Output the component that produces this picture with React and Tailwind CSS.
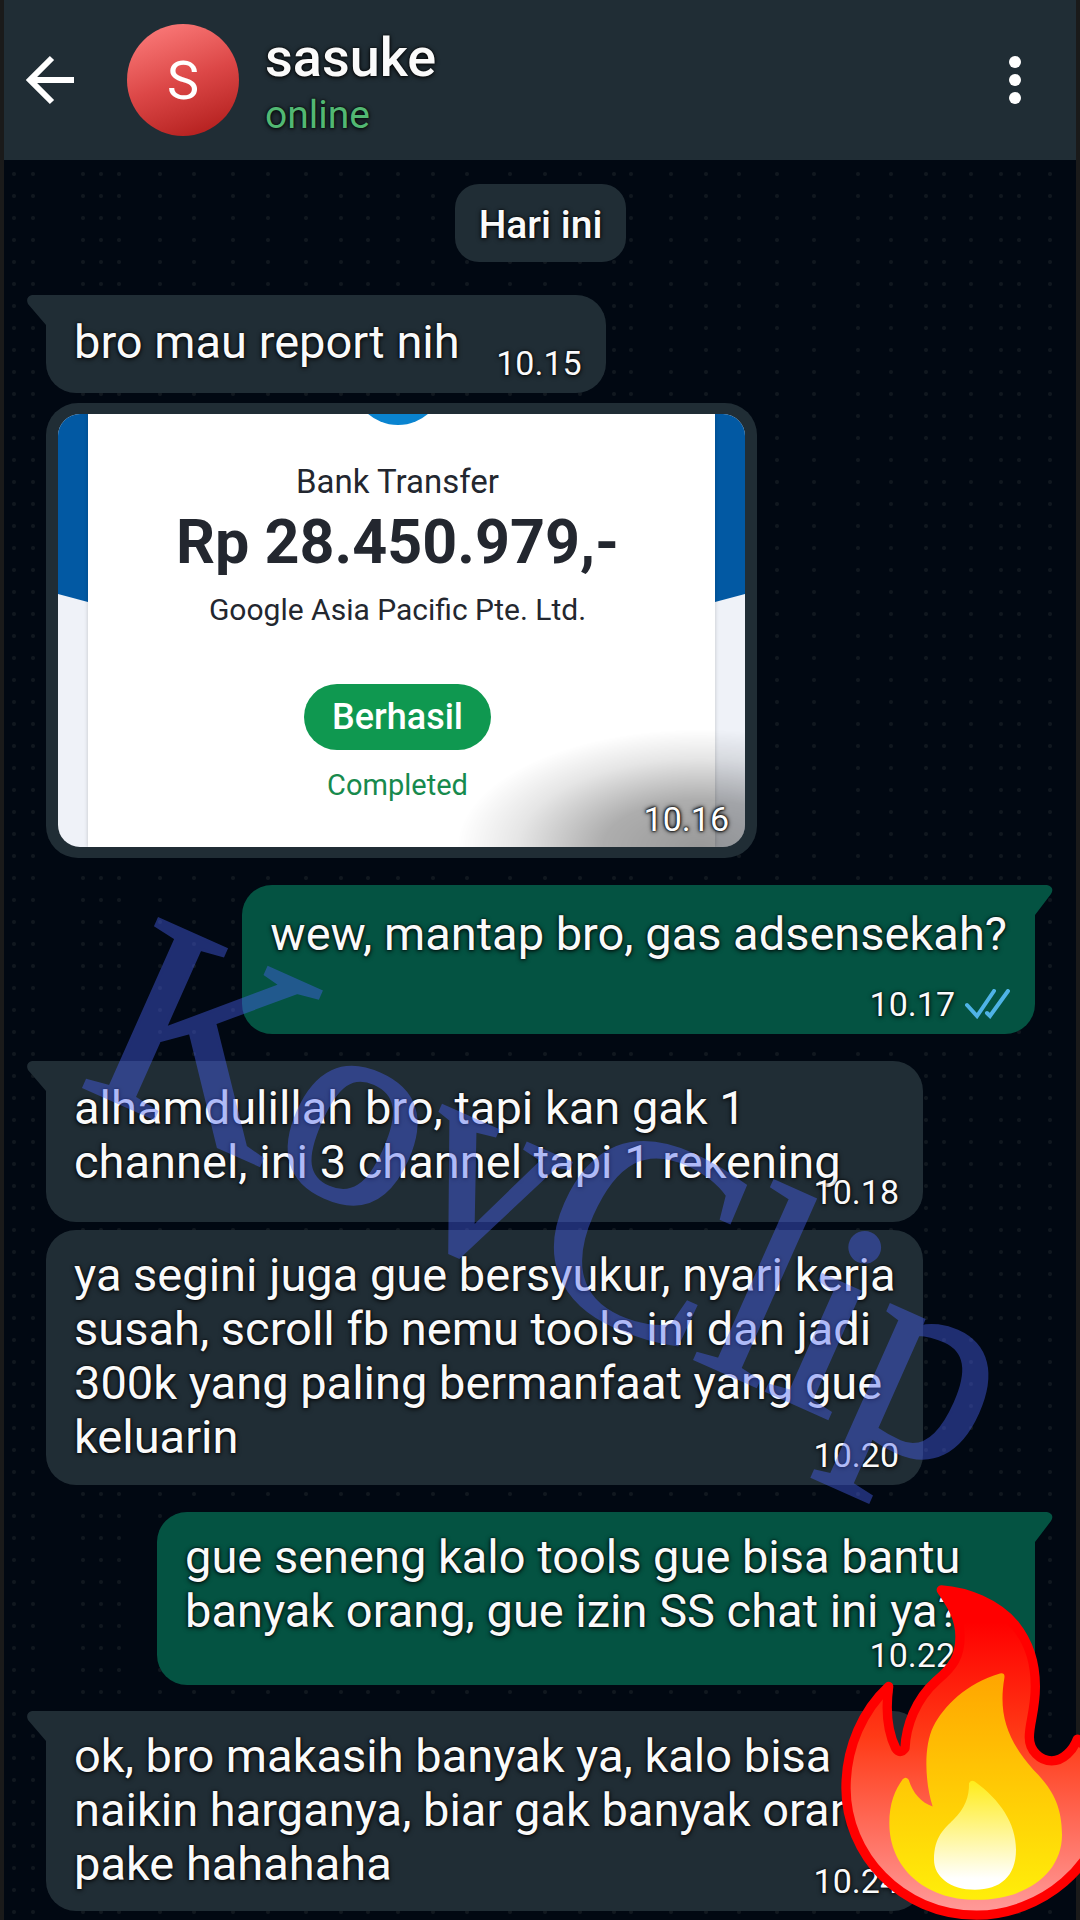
import React from "react";

const dotColumns = [
  10, 29, 79, 97, 115, 156, 190, 229, 264, 302, 337, 364, 394, 429, 463, 506,
  541, 576, 610, 627, 667, 702, 735, 773, 810, 854, 887, 922, 940, 967, 997,
  1015, 1046,
];

function Dots() {
  return (
    <svg className="absolute inset-0 h-full w-full" aria-hidden="true">
      <defs>
        <pattern id="dots" width="1072" height="22" patternUnits="userSpaceOnUse">
          {dotColumns.map((x) => (
            <circle key={x} cx={x} cy="14" r="2" fill="#11181f" />
          ))}
        </pattern>
      </defs>
      <rect width="100%" height="100%" fill="url(#dots)" />
    </svg>
  );
}

function Tail({ mine }) {
  return mine ? (
    <svg viewBox="0 0 20 34" className="absolute top-0 -right-[18px] h-[34px] w-5 text-[#045342]" aria-hidden="true">
      <path d="M0 0H14Q22 2 18 9L2 30V34H0Z" fill="currentColor" />
    </svg>
  ) : (
    <svg viewBox="0 0 20 34" className="absolute top-0 -left-[19px] h-[34px] w-5 text-[#202d35]" aria-hidden="true">
      <path d="M20 0H5Q-2 2 1 9L19 30V34H20Z" fill="currentColor" />
    </svg>
  );
}

function Ticks() {
  return (
    <svg viewBox="0 0 46 30" className="h-[30px] w-[46px]" fill="none" stroke="#4fb3e6" strokeWidth="4" strokeLinecap="round" aria-label="dibaca">
      <path d="M2 16L12 27L29 2M22 24L25 27L43 2" />
    </svg>
  );
}

function Time({ children, read }) {
  return (
    <span className="absolute right-6 bottom-2.5 flex items-center gap-2.5 text-[34px] leading-10">
      <time>{children}</time>
      {read && <Ticks />}
    </span>
  );
}

function Bubble({ mine, tail, time, className, children }) {
  return (
    <li className={mine ? "flex justify-end" : "flex justify-start"}>
      <div
        className={
          "relative rounded-[30px] pl-7 text-[47px] leading-[54px] " +
          (mine ? "bg-[#045342] " : "bg-[#202d35] ") +
          (tail ? (mine ? "rounded-tr-none " : "rounded-tl-none ") : "") +
          className
        }
      >
        {tail && <Tail mine={mine} />}
        <p>{children}</p>
        <Time read={mine}>{time}</Time>
      </div>
    </li>
  );
}

function Receipt() {
  return (
    <li className="mt-2.5 flex">
      <div className="w-full max-w-[711px] rounded-[32px] bg-[#202d35] px-3 py-[11px]">
        <div className="relative overflow-hidden rounded-[22px] bg-[#eff2f8] px-[30px] text-[#23272f] [text-shadow:none]">
          <svg viewBox="0 0 688 188" preserveAspectRatio="none" className="absolute inset-x-0 top-0 h-[188px] w-full" aria-hidden="true">
            <path d="M0 0H688V180L658 188H30L0 180Z" fill="#0259a3" />
          </svg>
          <div className="relative flex flex-col items-center overflow-hidden bg-white pt-[46px] pr-2 pb-10 shadow-[0_0_4px_rgba(0,0,0,0.2)]">
            <span className="absolute -top-[81px] h-[92px] w-[92px] rounded-full bg-[#0a84d0]" />
            <p className="text-[33px] leading-[44px]">Bank Transfer</p>
            <p className="text-[61px] leading-[76px] font-bold">Rp 28.450.979,-</p>
            <p className="mt-2 text-[30px] leading-[44px]">Google Asia Pacific Pte. Ltd.</p>
            <p className="mt-[52px] rounded-full bg-[#0f9850] px-7 text-4xl leading-[66px] font-medium text-white">Berhasil</p>
            <p className="mt-[13px] text-[29px] leading-[44px] text-[#178a4d]">Completed</p>
          </div>
          <div className="absolute right-0 bottom-0 h-32 w-80 bg-black/40 [mask-image:radial-gradient(ellipse_76%_92%_at_86%_100%,black_0%,rgba(0,0,0,0.8)_40%,rgba(0,0,0,0.25)_75%,transparent_100%)]" />
          <time className="absolute right-4 bottom-2 text-[34px] leading-10 text-white [text-shadow:0_0_2px_#000,0_0_3px_#000,0_0_5px_#000]">10.16</time>
        </div>
      </div>
    </li>
  );
}

function Fire() {
  return (
    <svg viewBox="180 250 720 1010" className="absolute right-0 bottom-0 h-[337px] w-60" aria-hidden="true">
      <defs>
        <linearGradient id="flame" x1="0" y1="0" x2="0" y2="1">
          <stop offset="0.1" stopColor="#ff0000" />
          <stop offset="0.45" stopColor="#ff3a16" />
          <stop offset="1" stopColor="#ff9c9c" />
        </linearGradient>
        <linearGradient id="middle" x1="0" y1="0" x2="0" y2="1">
          <stop offset="0" stopColor="#ffa500" />
          <stop offset="1" stopColor="#ffee0a" />
        </linearGradient>
        <linearGradient id="core" x1="0" y1="0" x2="0" y2="1">
          <stop offset="0" stopColor="#ffec1a" />
          <stop offset="0.9" stopColor="#ffffff" />
        </linearGradient>
      </defs>
      <path
        d="M484 270C560 275 650 310 705 375C755 438 766 500 766 560C766 630 748 670 748 712C748 752 780 783 815 783C850 783 880 750 892 718C940 760 981 810 981 890C970 1100 780 1246 590 1246C360 1246 198 1060 198 865C198 740 250 630 326 560C318 620 320 690 347 745Q360 765 375 745C378 680 405 600 470 542C520 500 540 470 540 410C540 350 510 310 484 270Z"
        fill="url(#flame)"
        stroke="#ff0000"
        strokeWidth="28"
        strokeLinejoin="round"
      />
      <path
        d="M660 521Q676 518 673 535C655 640 680 720 760 810C810 860 846 910 846 1005C846 1120 740 1200 590 1200C430 1200 328 1100 328 970C328 910 345 870 368 838Q378 828 386 840C398 880 425 910 458 920C435 850 430 740 460 680C490 620 560 550 660 521Z"
        fill="url(#middle)"
      />
      <path
        d="M567 850Q572 838 584 845C660 900 708 970 708 1050C708 1130 660 1170 585 1170C510 1170 462 1130 462 1080C462 1010 495 985 520 960C555 925 568 890 567 850Z"
        fill="url(#core)"
      />
    </svg>
  );
}

export default function App() {
  return (
    <div className="relative min-h-screen overflow-hidden bg-[#1a1a1a] px-1 font-['Roboto',sans-serif] text-[#fafafa] [text-shadow:0_0_2px_#000,0_1px_5px_#000]">
      <header className="flex h-40 items-center bg-[#202d35] pr-[41px] pl-5">
        <button type="button" aria-label="Kembali" className="mr-[49px]">
          <svg viewBox="0 0 54 54" className="h-[54px] w-[54px]" fill="none" stroke="#fff" strokeWidth="6">
            <path d="M50 27H7M28 5L6 27L28 49" />
          </svg>
        </button>
        <div className="flex h-28 w-28 items-center justify-center rounded-full bg-linear-160 from-[#ff8080] via-[#dc4747] to-[#ad1414] text-[54px] text-white [text-shadow:none]">S</div>
        <div className="ml-[26px] flex-1 pt-2.5">
          <h1 className="text-[54px] leading-[60px] font-medium">sasuke</h1>
          <p className="text-[39px] leading-[54px] text-[#52b873]">online</p>
        </div>
        <button type="button" aria-label="Menu" className="flex w-10 flex-col items-center gap-1.5">
          <span className="h-3 w-3 rounded-full bg-white" />
          <span className="h-3 w-3 rounded-full bg-white" />
          <span className="h-3 w-3 rounded-full bg-white" />
        </button>
      </header>

      <main className="relative min-h-[1760px] bg-[#010812] pt-6 pr-[41px] pl-[42px]">
        <Dots />
        <div className="relative">
          <div className="flex justify-center">
            <p className="rounded-3xl bg-[#202d35] px-6 pt-3.5 pb-2.5 text-[39px] leading-[54px] font-medium">Hari ini</p>
          </div>
          <ul className="mt-[33px]">
            <Bubble tail time="10.15" className="pt-5 pr-[146px] pb-6">bro mau report nih</Bubble>
            <Receipt />
            <Bubble mine tail time="10.17" className="mt-[27px] pt-[22px] pr-7 pb-[73px]">wew, mantap bro, gas adsensekah?</Bubble>
            <Bubble tail time="10.18" className="mt-[27px] w-full max-w-[877px] pt-5 pr-7 pb-[33px]">alhamdulillah bro, tapi kan gak 1 channel, ini 3 channel tapi 1 rekening</Bubble>
            <Bubble time="10.20" className="mt-2 w-full max-w-[877px] pt-[18px] pr-5 pb-[21px]">ya segini juga gue bersyukur, nyari kerja susah, scroll fb nemu tools ini dan jadi 300k yang paling bermanfaat yang gue keluarin</Bubble>
            <Bubble mine tail time="10.22" className="mt-[27px] w-full max-w-[878px] pt-[18px] pr-7 pb-[47px]">gue seneng kalo tools gue bisa bantu banyak orang, gue izin SS chat ini ya?</Bubble>
            <Bubble tail time="10.24" className="mt-[26px] w-full max-w-[877px] pt-[18px] pr-7 pb-5">ok, bro makasih banyak ya, kalo bisa naikin harganya, biar gak banyak orang pake hahahaha</Bubble>
          </ul>
        </div>
      </main>

      <p className="pointer-events-none absolute top-[857px] left-[115px] origin-left rotate-[24deg] font-['Liberation_Serif',serif] text-[281px] leading-none text-[#4a63f5] opacity-42 [-webkit-text-stroke:3px_#4a63f5] [text-shadow:none]">KovClip</p>
      <Fire />
    </div>
  );
}
